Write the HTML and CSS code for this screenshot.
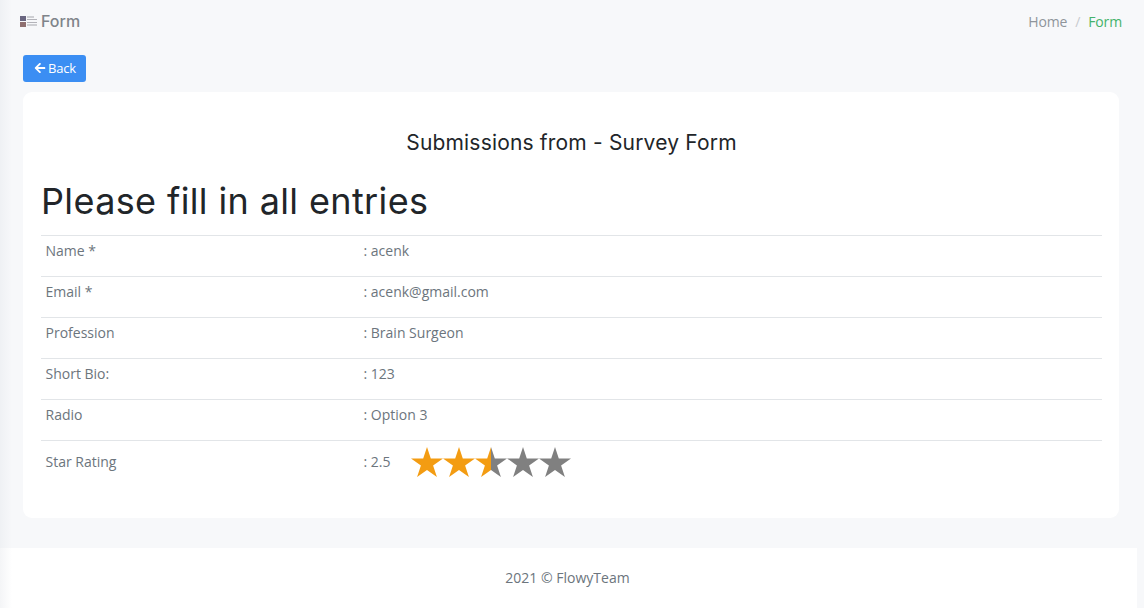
FILE: index.html
```html
<!DOCTYPE html>
<html lang="en">
<head>
    <meta charset="UTF-8">
    <meta name="viewport" content="width=device-width, initial-scale=1.0">
    <title>Form</title>
    <link rel="stylesheet" href="styles.css">
</head>
<body>
    <div class="page">
        <header class="topbar">
            <div class="page-title">
                <svg class="title-icon" width="17" height="11" viewBox="0 0 17 11">
                    <rect x="0" y="0" width="6" height="5" fill="#6a6680"/>
                    <rect x="0" y="6" width="6" height="5" fill="#8f6f70"/>
                    <rect x="7" y="0.5" width="7" height="1" fill="#a6a6ac"/>
                    <rect x="7" y="3" width="10" height="1" fill="#b4b4ba"/>
                    <rect x="7" y="6" width="10" height="1" fill="#b4b4ba"/>
                    <rect x="7" y="8.5" width="10" height="1" fill="#a6a6ac"/>
                </svg>
                <span>Form</span>
            </div>
            <nav class="breadcrumb">
                <span>Home</span>
                <span class="sep">/</span>
                <span class="active">Form</span>
            </nav>
        </header>

        <div class="content">
            <a class="btn-back" href="#">
                <svg width="12" height="12" viewBox="0 0 448 512"><path fill="#fff" d="M257.500 445.100l-22.200 22.200c-9.400 9.400-24.600 9.400-33.900 0L7 273c-9.400-9.400-9.400-24.600 0-33.900L201.400 44.700c9.400-9.400 24.600-9.400 33.900 0l22.200 22.200c9.500 9.500 9.300 25-.4 34.300L136.600 216H424c13.300 0 24 10.700 24 24v32c0 13.300-10.700 24-24 24H136.600l120.500 114.800c9.800 9.300 10 24.800.4 34.300z"/></svg>
                Back
            </a>

            <section class="card">
                <h4 class="card-title">Submissions from - Survey Form</h4>
                <h1 class="form-title">Please fill in all entries</h1>
                <table class="entries">
                    <tr><td class="label">Name *</td><td>: acenk</td></tr>
                    <tr><td class="label">Email *</td><td>: acenk@gmail.com</td></tr>
                    <tr><td class="label">Profession</td><td>: Brain Surgeon</td></tr>
                    <tr><td class="label">Short Bio:</td><td>: 123</td></tr>
                    <tr><td class="label">Radio</td><td>: Option 3</td></tr>
                    <tr class="rating-row">
                        <td class="label">Star Rating</td>
                        <td>
                            <div class="rating">
                                <span>: 2.5</span>
                                <svg class="stars" width="160" height="30" viewBox="0 0 160 30">
                                    <defs>
                                        <linearGradient id="half">
                                            <stop offset="50%" stop-color="#f39c12"/>
                                            <stop offset="50%" stop-color="#808080"/>
                                        </linearGradient>
                                        <polygon id="star" points="16,0 19.800,11.400 32,11.400 22.100,18.500 25.900,30 16,22.900 6.100,30 9.900,18.500 0,11.400 12.200,11.400"/>
                                    </defs>
                                    <use href="#star" fill="#f39c12"/>
                                    <use href="#star" x="32" fill="#f39c12"/>
                                    <use href="#star" x="64" fill="url(#half)"/>
                                    <use href="#star" x="96" fill="#808080"/>
                                    <use href="#star" x="128" fill="#808080"/>
                                </svg>
                            </div>
                        </td>
                    </tr>
                </table>
            </section>
        </div>

        <footer class="footer">2021 © FlowyTeam</footer>
    </div>
</body>
</html>
```

FILE: styles.css
```css
* {
    box-sizing: border-box;
}
html, body {
    height: 100%;
}
body {
    margin: 0;
    background: #f7f8fa;
    font-family: "Open Sans", "Noto Sans", sans-serif;
    font-size: 14px;
    color: #6c757d;
    overflow: hidden;
}
.page {
    width: 1137px;
    min-height: 608px;
    display: flex;
    flex-direction: column;
    background: linear-gradient(to right, #eff1f4, #f7f8fa 12px);
}
.topbar {
    height: 42px;
    padding: 0 15px 0 20px;
    display: flex;
    align-items: center;
    justify-content: space-between;
}
.page-title {
    display: flex;
    align-items: center;
    gap: 4px;
    font-family: Inter, sans-serif;
    font-size: 16px;
    font-weight: 500;
    color: #7f848a;
}
.breadcrumb {
    display: flex;
    gap: 8px;
    font-size: 14px;
    letter-spacing: -0.15px;
    color: #8f959b;
}
.breadcrumb .sep {
    color: #c8cbcf;
}
.breadcrumb .active {
    color: #45b36b;
}
.content {
    padding: 13px 18px 30px 23px;
}
.btn-back {
    display: inline-flex;
    align-items: center;
    gap: 2px;
    width: 63px;
    height: 27px;
    padding-left: 11px;
    padding-bottom: 1px;
    background: #3b8ef3;
    border-radius: 3px;
    color: #fff;
    font-size: 13px;
    letter-spacing: -0.2px;
    text-decoration: none;
    margin-bottom: 10px;
}
.card {
    background: #fff;
    border-radius: 9px;
    width: 1096px;
    height: 426px;
    padding: 38px 17px 0 18px;
}
.card-title {
    margin: 0 0 24px;
    font-family: Inter, sans-serif;
    font-size: 21px;
    font-weight: 400;
    letter-spacing: 0.18px;
    line-height: 26px;
    color: #212529;
    text-align: center;
}
.form-title {
    margin: 0 0 13px;
    font-family: Inter, sans-serif;
    font-size: 36px;
    font-weight: 400;
    letter-spacing: 0.37px;
    line-height: 42px;
    color: #212529;
}
.entries {
    width: 100%;
    border-collapse: collapse;
}
.entries td {
    height: 41px;
    padding: 5px 4.500px 15px;
    line-height: 20px;
    border-top: 1px solid #e2e5e8;
    vertical-align: top;
}
.entries .label {
    width: 318px;
}
.rating-row td {
    padding-top: 6px;
}
.rating-row .label {
    padding-top: 11px;
}
.rating {
    display: flex;
    align-items: center;
    gap: 20px;
}
.stars {
    display: block;
}
.footer {
    height: 60px;
    margin-top: auto;
    padding-bottom: 2px;
    padding-right: 2px;
    background: linear-gradient(to right, #f4f5f7, #fff 12px);
    display: flex;
    align-items: center;
    justify-content: center;
    font-size: 14px;
}
```
